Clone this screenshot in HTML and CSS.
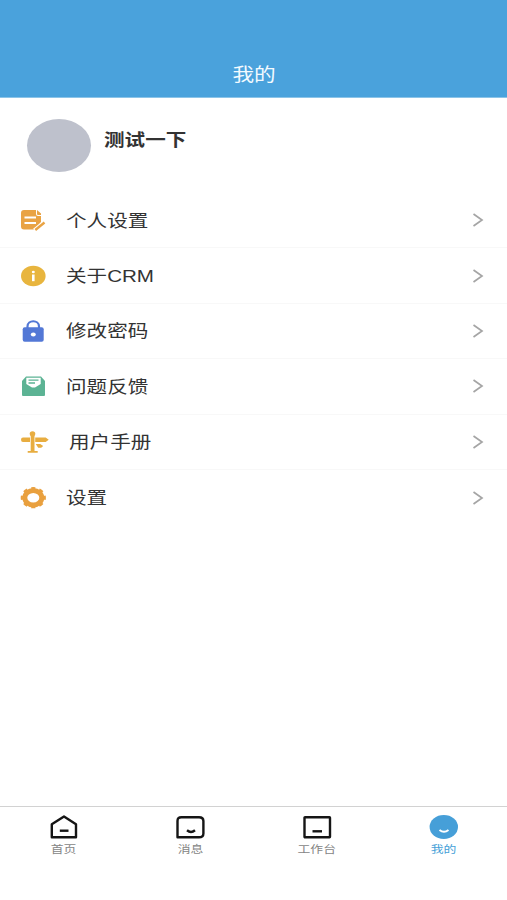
FILE: index.html
```html
<!DOCTYPE html>
<html lang="zh-CN">
<head>
  <meta charset="UTF-8" />
  <meta name="viewport" content="width=device-width, initial-scale=1" />
  <title>我的</title>
  <link rel="stylesheet" href="styles.css">
</head>
<body>
  <header class="navbar">
    <h1>我的</h1>
  </header>
  <main>
    <section class="profile">
      <div class="avatar"></div>
      <div class="name">测试一下</div>
    </section>
    <ul class="menu">
      <li>
        <svg class="icon" width="30" height="26" viewBox="0 0 30 26">
          <path fill="#e9a344" d="M5 3h12v4q0 2 2 2h3v6l-7 7.500H5q-3 0-3-3V6q0-3 3-3zM18 3l4 3.500V8h-3q-1 0-1-1z"/>
          <path stroke="#fff" stroke-width="1.900" d="M5.500 10.500H17M5.500 16H17"/>
          <path stroke="#fff" stroke-width="4.500" d="M15.500 23.500L27 14.500"/>
          <path stroke="#e9a344" stroke-width="2.400" d="M16.300 23L25.500 15.500"/>
        </svg>
        <span class="label">个人设置</span>
        <svg class="arrow" width="12" height="16" viewBox="0 0 12 16"><path d="M1.500 2l8.500 6-8.500 6"/></svg>
      </li>
      <li>
        <svg class="icon" width="30" height="26" viewBox="0 0 30 26">
          <ellipse cx="14.300" cy="13" rx="12.300" ry="10.300" fill="#e8b53e"/>
          <ellipse cx="14.300" cy="9" rx="1.500" ry="1.300" fill="#fff"/>
          <path fill="#fff" d="M13 11.500h2.600v6.700H13z"/>
        </svg>
        <span class="label">关于CRM</span>
        <svg class="arrow" width="12" height="16" viewBox="0 0 12 16"><path d="M1.500 2l8.500 6-8.500 6"/></svg>
      </li>
      <li>
        <svg class="icon" width="30" height="26" viewBox="0 0 30 26">
          <path fill="none" stroke="#5378d6" stroke-width="2.200" d="M8.500 10V8.500C8.500 1.500 20 1.500 20 8.500V10"/>
          <rect x="3.700" y="9.300" width="21" height="14.500" rx="2" fill="#5378d6"/>
          <ellipse cx="14.300" cy="16.500" rx="2.500" ry="2.100" fill="#fff"/>
        </svg>
        <span class="label">修改密码</span>
        <svg class="arrow" width="12" height="16" viewBox="0 0 12 16"><path d="M1.500 2l8.500 6-8.500 6"/></svg>
      </li>
      <li>
        <svg class="icon" width="30" height="26" viewBox="0 0 30 26">
          <path fill="#5cb394" d="M3 8L7 3.500H22L26 8V22Q26 23 25 23H4Q3 23 3 22z"/>
          <path fill="#fff" d="M7.300 4.700H21.700V11L16 14.500H13L7.300 11z"/>
          <path stroke="#5cb394" stroke-width="1.300" d="M9.500 7.200H19.500M9.500 10H16"/>
        </svg>
        <span class="label">问题反馈</span>
        <svg class="arrow" width="12" height="16" viewBox="0 0 12 16"><path d="M1.500 2l8.500 6-8.500 6"/></svg>
      </li>
      <li>
        <svg class="icon" width="30" height="26" viewBox="0 0 30 26">
          <g fill="#e8ad40">
            <ellipse cx="13.500" cy="4.800" rx="2.800" ry="2.500"/>
            <path d="M11.700 5h3.800v17h3.200v1.800h-10v-1.800h3z"/>
            <path d="M4 8.500h7v4.400H4q-2 0-2-2.200t2-2.200zM16.200 8.500h10.500l3 2.200-3 2.200H16.200zM16.700 15h4.500l3 1.900-2 1.900h-3z"/>
          </g>
        </svg>
        <span class="label manual">用户手册</span>
        <svg class="arrow" width="12" height="16" viewBox="0 0 12 16"><path d="M1.500 2l8.500 6-8.500 6"/></svg>
      </li>
      <li>
        <svg class="icon" width="30" height="26" viewBox="0 0 30 26">
          <g fill="none" stroke="#e9a03e">
            <ellipse cx="14.300" cy="12.700" rx="8.500" ry="7.200" stroke-width="5"/>
            <ellipse cx="14.300" cy="12.700" rx="11.500" ry="9.500" stroke-width="2.200" pathLength="80" stroke-dasharray="5 5" stroke-dashoffset="2.500"/>
          </g>
        </svg>
        <span class="label">设置</span>
        <svg class="arrow" width="12" height="16" viewBox="0 0 12 16"><path d="M1.500 2l8.500 6-8.500 6"/></svg>
      </li>
    </ul>
  </main>
  <nav class="tabbar">
    <a class="tab">
      <svg width="30" height="26" viewBox="0 0 30 26"><path d="M3.800 10.300L16 2.500l12 7.800V23.300H3.800z"/><path d="M11.800 16.700h8.700"/></svg>
      <span>首页</span>
    </a>
    <a class="tab">
      <svg width="30" height="26" viewBox="0 0 30 26"><path d="M6.400 3.200H24Q28.400 3.200 28.400 7V19.500Q28.400 23.300 24 23.300H2.500V7Q2.500 3.200 6.400 3.200z"/><path d="M12 16.300Q16 19.500 20 16.300"/></svg>
      <span>消息</span>
    </a>
    <a class="tab">
      <svg width="30" height="26" viewBox="0 0 30 26"><rect x="2.500" y="3.200" width="25.500" height="20" rx=".5"/><path d="M10.500 17.300h9.500"/></svg>
      <span>工作台</span>
    </a>
    <a class="tab active">
      <svg width="30" height="26" viewBox="0 0 30 26"><ellipse class="face" cx="14.800" cy="13" rx="14.200" ry="11.900"/><path class="smile" d="M10.500 16Q15 19.500 19.500 16"/></svg>
      <span>我的</span>
    </a>
  </nav>
</body>
</html>
```
FILE: styles.css
```css
* {
  box-sizing: border-box;
}
body {
  margin: 0;
  height: 900px;
  display: flex;
  flex-direction: column;
  overflow: hidden;
  background: #fff;
  color: #333;
  font-family: "Noto Sans CJK SC", sans-serif;
}
.navbar {
  display: flex;
  justify-content: center;
  height: 98px;
  padding-top: 49px;
  background: #4aa2dc;
  border-bottom: 1px solid #8cc4e8;
}
h1 {
  margin: 0;
  font-size: 18px;
  font-weight: 400;
  line-height: 48px;
  color: #f3faff;
  transform: scaleX(1.2);
}
main {
  flex: 1;
}
.profile {
  display: flex;
  height: 95px;
  padding: 21px 27px 0;
}
.avatar {
  width: 64px;
  height: 53px;
  border-radius: 50%;
  background: #bec1cc;
}
.name {
  margin-left: 12.5px;
  font-size: 17px;
  font-weight: 700;
  line-height: 40px;
  transform: scaleX(1.21);
  transform-origin: left;
}
.menu {
  margin: 0;
  padding: 0;
  list-style: none;
}
.menu li {
  display: flex;
  align-items: center;
  height: 55.4px;
  padding: 0 23.5px 0 19px;
  border-bottom: 1px solid #f8f8f8;
}
.menu li:last-child {
  border-bottom: none;
}
.icon {
  margin-right: 17px;
}
.label {
  padding-top: 3px;
  font-family: "Liberation Sans", "Noto Sans CJK SC", sans-serif;
  font-size: 17px;
  line-height: 24px;
  transform: scaleX(1.21);
  transform-origin: left;
}
.manual {
  margin-left: 3px;
}
.arrow {
  margin-left: auto;
  fill: none;
  stroke: #a5a5a5;
  stroke-width: 1.7;
}
.tabbar {
  display: flex;
  height: 94px;
  border-top: 1px solid #d2d2d2;
}
.tab {
  flex: 1;
  display: flex;
  flex-direction: column;
  align-items: center;
  padding-top: 7px;
  color: #858585;
}
.tab svg {
  fill: none;
  stroke: #151515;
  stroke-width: 2.4;
  stroke-linejoin: round;
}
.tab span {
  font-size: 10.5px;
  line-height: 18px;
  transform: scaleX(1.22);
}
.tab.active {
  color: #469fd8;
}
.tab .face {
  fill: #469fd8;
  stroke: none;
}
.tab .smile {
  stroke: #fff;
  stroke-width: 2;
}
```
